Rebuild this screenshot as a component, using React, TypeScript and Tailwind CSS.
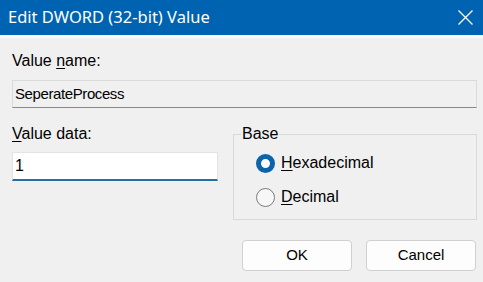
import { useState } from 'react';

type Base = 'hex' | 'dec';

function RadioOption({
  checked,
  onSelect,
  accessKey,
  rest,
}: {
  checked: boolean;
  onSelect: () => void;
  accessKey: string;
  rest: string;
}) {
  return (
    <button type="button" onClick={onSelect} className="flex items-center h-[20px] text-left">
      {checked ? (
        <span className="w-[19px] h-[19px] rounded-full border-[5px] border-[#0b63a8] bg-white" />
      ) : (
        <span className="w-[19px] h-[19px] rounded-full border border-[#7a7a7a] bg-[#f7f7f7]" />
      )}
      <span className="ml-[6px] text-[16px] leading-[20px] text-black">
        <u className="underline-offset-2">{accessKey}</u>
        {rest}
      </span>
    </button>
  );
}

export default function App() {
  const [base, setBase] = useState<Base>('hex');
  const [data, setData] = useState('1');

  return (
    <div
      className="w-[483px] h-[282px] bg-[#f0f0f0] overflow-hidden flex flex-col"
      style={{ fontFamily: '"Liberation Sans", Arial, sans-serif' }}
    >
      {/* Title bar */}
      <div className="h-[35px] bg-[#0063b1] flex items-center justify-between pl-[8px] pr-[10px] shrink-0">
        <span
          className="text-white text-[16.5px] leading-none"
          style={{ fontFamily: '"Noto Sans", "Open Sans", sans-serif' }}
        >
          Edit DWORD (32-bit) Value
        </span>
        <svg width="15" height="15" viewBox="0 0 15 15" className="text-white">
          <path d="M0.5 0.5L14.5 14.5M14.5 0.5L0.5 14.5" stroke="currentColor" strokeWidth="1.3" />
        </svg>
      </div>
      <div className="h-[3px] bg-[#f8fafb] shrink-0" />

      <div className="pl-[12px] pr-[6px] pt-[14px] flex flex-col">
        {/* Value name */}
        <div className="text-[16px] leading-[18px] text-black">
          Value <u className="underline-offset-2">n</u>ame:
        </div>
        <div className="mt-[10px] h-[28px] border border-[#dadada] border-b-[#8a8a8a] bg-[#f0f0f0] flex items-center pl-[2px] text-[15px] tracking-[-0.4px] text-black">
          SeperateProcess
        </div>

        <div className="flex">
          {/* Value data */}
          <div className="w-[206px] shrink-0 pt-[17px] flex flex-col">
            <div className="text-[16px] leading-[18px] text-black">
              <u className="underline-offset-2">V</u>alue data:
            </div>
            <input
              value={data}
              onChange={(e) => setData(e.target.value)}
              className="mt-[9px] h-[29px] w-full bg-white border border-[#e3e3e3] border-b-2 border-b-[#24709f] px-[2px] text-[16px] text-black outline-none"
            />
          </div>

          {/* Base group */}
          <fieldset className="ml-[15px] flex-1 mt-[17px] border border-[#d9d9d9] px-0 pb-[12px]">
            <legend className="ml-[7px] px-[1px] text-[16px] leading-[18px] text-black">Base</legend>
            <div className="pl-[22px] pt-[10px] flex flex-col gap-[14px]">
              <RadioOption
                checked={base === 'hex'}
                onSelect={() => setBase('hex')}
                accessKey="H"
                rest="exadecimal"
              />
              <RadioOption
                checked={base === 'dec'}
                onSelect={() => setBase('dec')}
                accessKey="D"
                rest="ecimal"
              />
            </div>
          </fieldset>
        </div>

        {/* Buttons */}
        <div className="mt-[20px] flex justify-end gap-[14px] pr-px">
          <button className="w-[110px] h-[31px] rounded-[4px] border border-[#d0d0d0] bg-[#fdfdfd] text-[15px] text-black">
            OK
          </button>
          <button className="w-[110px] h-[31px] rounded-[4px] border border-[#d0d0d0] bg-[#fdfdfd] text-[15px] text-black">
            Cancel
          </button>
        </div>
      </div>
    </div>
  );
}
